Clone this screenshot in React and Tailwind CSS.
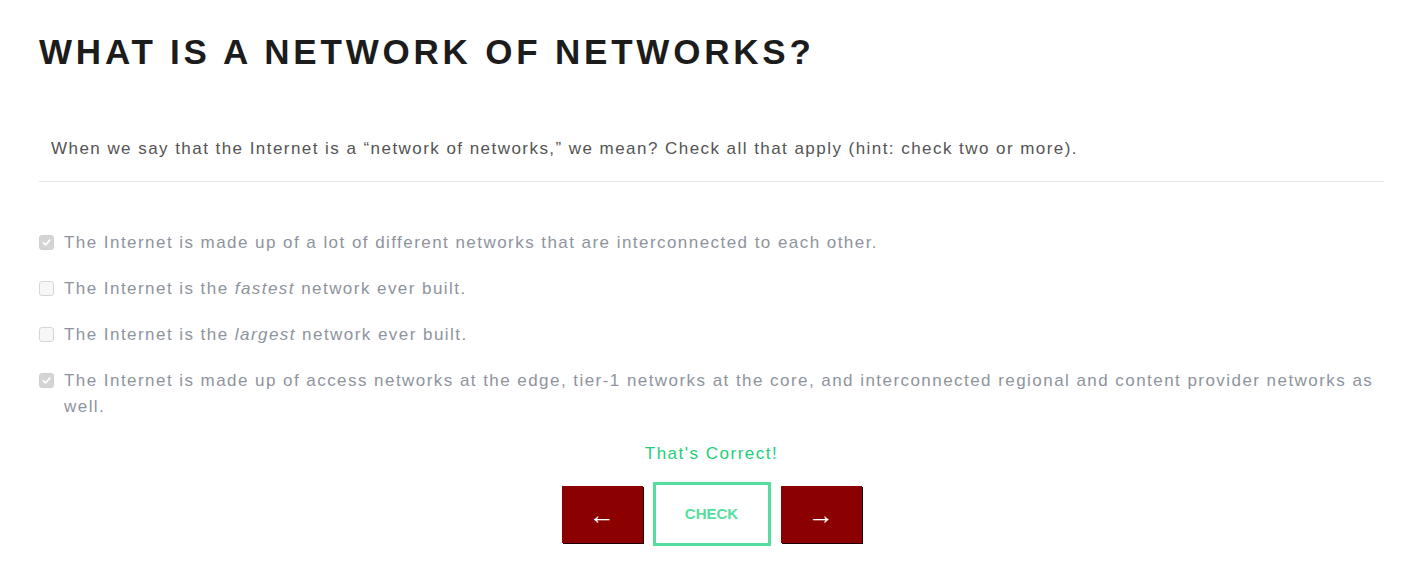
import React, { useState } from "react";

const options = [
  {
    id: 1,
    checked: true,
    content: "The Internet is made up of a lot of different networks that are interconnected to each other.",
  },
  {
    id: 2,
    checked: false,
    content: (
      <>
        The Internet is the <em>fastest</em> network ever built.
      </>
    ),
  },
  {
    id: 3,
    checked: false,
    content: (
      <>
        The Internet is the <em>largest</em> network ever built.
      </>
    ),
  },
  {
    id: 4,
    checked: true,
    content:
      "The Internet is made up of access networks at the edge, tier-1 networks at the core, and interconnected regional and content provider networks as well.",
  },
];

const Checkbox = ({ checked }) => (
  <span
    className={`mt-[5px] flex h-[15px] w-[15px] shrink-0 items-center justify-center rounded-[3px] border ${
      checked ? "border-[#cfcfcf] bg-[#d4d4d4]" : "border-[#d6d6d6] bg-[#f7f7f7]"
    }`}
  >
    {checked && (
      <svg viewBox="0 0 12 12" className="h-[11px] w-[11px]">
        <path d="M2.5 6.2 L5 8.6 L9.6 3.4" fill="none" stroke="#ffffff" strokeWidth="1.8" strokeLinecap="round" strokeLinejoin="round" />
      </svg>
    )}
  </span>
);

const App = () => {
  const [answers] = useState(options);

  return (
    <div className="min-h-screen bg-white font-['Liberation_Sans',Arial,sans-serif]">
      <div className="pl-[39px] pr-[42px] pt-[30px]">
        <h1 className="text-[35px] font-bold leading-[44px] tracking-[3.8px] text-[#1c1c1c]">
          WHAT IS A NETWORK OF NETWORKS?
        </h1>

        <p className="mt-[63px] pb-[20px] pl-[12px] text-[17px] leading-[24px] tracking-[1.45px] text-[#545454] border-b border-[#e6e6e6]">
          When we say that the Internet is a “network of networks,” we mean? Check all that apply (hint: check two or more).
        </p>

        <ul className="mt-[48px] flex flex-col gap-[20px]">
          {answers.map((opt) => (
            <li key={opt.id} className="flex items-start gap-[10px]">
              <Checkbox checked={opt.checked} />
              <span className="text-[17px] leading-[26px] tracking-[1.45px] text-[#8e949d]">
                {opt.content}
              </span>
            </li>
          ))}
        </ul>

        <div className="mt-[22px] flex flex-col items-center">
          <p className="text-[17px] leading-[24px] tracking-[1.5px] text-[#1ccf78]">
            That's Correct!
          </p>
          <div className="mt-[16px] flex items-center gap-[10px]">
            <button className="flex h-[57px] w-[81px] items-end justify-center bg-[#8b0000] pb-[15px] text-[26px] leading-[26px] text-white shadow-[1px_1px_0_#1a0000]">
              ←
            </button>
            <button className="h-[64px] w-[118px] border-[3px] border-[#55dd9e] bg-white text-[15px] font-bold text-[#55dd9e]">
              CHECK
            </button>
            <button className="flex h-[57px] w-[81px] items-end justify-center bg-[#8b0000] pb-[15px] text-[26px] leading-[26px] text-white shadow-[1px_1px_0_#1a0000]">
              →
            </button>
          </div>
        </div>
      </div>
    </div>
  );
};

export default App;
